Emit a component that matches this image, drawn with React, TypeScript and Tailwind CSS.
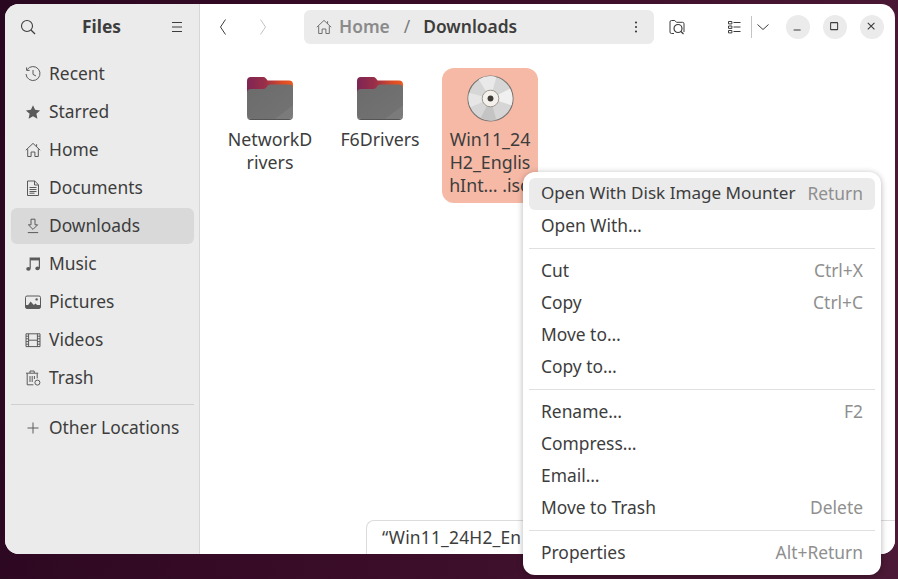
import React from "react";

const S = ({ children, size = 16, className = "" }: { children: React.ReactNode; size?: number; className?: string }) => (
  <svg width={size} height={size} viewBox="0 0 16 16" fill="none" stroke="currentColor" strokeWidth={1} className={"shrink-0 " + className}>
    {children}
  </svg>
);

const HomeIcon = ({ className = "" }: { className?: string }) => (
  <S className={className}>
    <path d="M0.8 8.2 8 1.4l7.2 6.8M2.7 7.2v7.3h3.4V10h3.8v4.5h3.4V7.2M11.6 2.2v2.6" />
  </S>
);

const icons: Record<string, React.ReactNode> = {
  Recent: (
    <S>
      <path d="M2.2 3.6A7 7 0 1 1 1 8" />
      <path d="M1.6 1.4v3h3M8 4v4.4l3 1.6" />
    </S>
  ),
  Starred: (
    <S>
      <path d="M8 1.2l2.1 4.6 5 .6-3.7 3.4 1 4.9L8 12.3l-4.4 2.4 1-4.9L.9 6.4l5-.6z" fill="currentColor" stroke="none" />
    </S>
  ),
  Home: <HomeIcon />,
  Documents: (
    <S>
      <path d="M2.5 1h7.2l3.8 3.8v10.7h-11zM9.5 1v4h4" />
      <path d="M4.5 7.5h7M4.5 9.5h7M4.5 11.5h7M4.5 13.2h5" />
    </S>
  ),
  Downloads: (
    <S>
      <path d="M6 1.2h4v5.6h2.6L8 11.4 3.4 6.8H6zM2.8 14.6h10.4" />
    </S>
  ),
  Music: (
    <S>
      <path d="M5.2 12.5V2.2h9.2v10" strokeWidth={1.2} />
      <path d="M5.2 2h9.2v2.4H5.2z" fill="currentColor" stroke="none" />
      <ellipse cx="3.4" cy="12.9" rx="2.2" ry="1.8" fill="currentColor" stroke="none" />
      <ellipse cx="12.5" cy="12.4" rx="2.2" ry="1.8" fill="currentColor" stroke="none" />
    </S>
  ),
  Pictures: (
    <S>
      <rect x="0.5" y="2" width="15" height="12.5" rx="1.5" />
      <path d="M1 14l4.6-6.4 3.2 3.5 1.8-1.7 4.4 4.6z" fill="currentColor" stroke="none" />
      <rect x="1" y="11" width="14" height="3" fill="currentColor" stroke="none" />
      <circle cx="11.6" cy="5.4" r="1.2" fill="currentColor" stroke="none" />
    </S>
  ),
  Videos: (
    <S>
      <path d="M1 1.8h14v12.8H1zM3.6 1.8v12.8M12.4 1.8v12.8M3.6 8.2h8.8" />
      <path d="M1 4.2h2.6M1 6.8h2.6M1 9.6h2.6M1 12.2h2.6M12.4 4.2H15M12.4 6.8H15M12.4 9.6H15M12.4 12.2H15" />
    </S>
  ),
  Trash: (
    <S>
      <path d="M1 3.2h12.2M5 3V1h4.2v2M2.2 3.4v11.4h6.2M12.2 3.4v5" />
      <path d="M5 6v6M7.2 6v6M9.4 6v3" />
      <circle cx="12.4" cy="12.6" r="2.5" />
    </S>
  ),
  "Other Locations": (
    <S>
      <path d="M8 2.5v11M2.5 8h11" />
    </S>
  ),
};

const places = ["Recent", "Starred", "Home", "Documents", "Downloads", "Music", "Pictures", "Videos", "Trash"];

const SidebarRow = ({ name }: { name: string }) => (
  <div className={"flex h-[36px] items-center gap-[8px] rounded-[6px] pl-[14px] " + (name === "Downloads" ? "bg-[#d9d9d9]" : "")}>
    <span className="flex w-[16px] text-[#5a5a5a]">{icons[name]}</span>
    <span className="mb-[2px] text-[#3d3d3d]">{name}</span>
  </div>
);

const Folder = () => (
  <svg width="46" height="43" viewBox="0 0 46 43" className="shrink-0">
    <defs>
      <linearGradient id="fb" x1="0" x2="1" y1="0" y2="0">
        <stop offset="0" stopColor="#7e2553" />
        <stop offset="0.4" stopColor="#9a2f48" />
        <stop offset="0.75" stopColor="#d84a28" />
        <stop offset="1" stopColor="#ee5a1f" />
      </linearGradient>
      <linearGradient id="ff" x1="0" x2="1" y1="0" y2="1">
        <stop offset="0" stopColor="#6b6b6b" />
        <stop offset="0.8" stopColor="#727272" />
        <stop offset="0.81" stopColor="#7b7b7b" />
        <stop offset="1" stopColor="#7b7b7b" />
      </linearGradient>
    </defs>
    <path d="M0 4a4 4 0 0 1 4-4h12a4 4 0 0 1 3 1.4l1.6 2.1H42a4 4 0 0 1 4 4V20H0z" fill="url(#fb)" />
    <path d="M0 16a4 4 0 0 1 4-4h12c2 0 2.8-.8 3.8-2.2C20.8 8.4 21.8 7.5 24 7.5h18a4 4 0 0 1 4 4V38a4 4 0 0 1-4 4H4a4 4 0 0 1-4-4z" fill="url(#ff)" />
    <path d="M0 38a4 4 0 0 0 4 4h38a4 4 0 0 0 4-4v1a4 4 0 0 1-4 4H4a4 4 0 0 1-4-4z" fill="#555" />
  </svg>
);

const Disc = () => (
  <svg width="47" height="47" viewBox="0 0 48 48" className="shrink-0">
    <circle cx="24" cy="24" r="23" fill="#d6d6d6" stroke="#77736f" strokeWidth="1.2" />
    <path d="M24 24 12 4.5A23 23 0 0 1 30 2z" fill="#e9e9e9" />
    <path d="M24 24 44 14A23 23 0 0 1 45.5 31z" fill="#f0f0f0" />
    <path d="M24 24 14 44A23 23 0 0 0 30 46z" fill="#c4c4c4" />
    <path d="M24 24 2 18A23 23 0 0 0 3.5 33z" fill="#e6e6e6" />
    <circle cx="24" cy="24" r="8.5" fill="#f4f1ec" stroke="#9a948c" strokeWidth="1" />
    <circle cx="24" cy="24" r="3" fill="#3f3b37" />
  </svg>
);

const FileItem = ({ label, selected, children }: { label: string[]; selected?: boolean; children: React.ReactNode }) => (
  <div className={"flex h-[135px] w-[96px] flex-col items-center rounded-[12px] pt-[6px] " + (selected ? "bg-[#f6b9a6]" : "")}>
    <div className="flex h-[48px] items-center">{children}</div>
    <div className="mt-[6px] flex w-full flex-col items-center text-center text-[17.8px] leading-[23px] text-[#3d3d3d]">
      {label.map((l) => (
        <span key={l} className="whitespace-nowrap">{l}</span>
      ))}
    </div>
  </div>
);

const MenuRow = ({ label, hint, active }: { label: string; hint?: string; active?: boolean }) => (
  <div className={"flex h-[32px] items-center justify-between rounded-[6px] px-[12px] " + (active ? "bg-[#ebebeb]" : "")}>
    <span className={"mb-[2px] whitespace-nowrap text-[#3d3d3d] " + (active ? "text-[17.1px]" : "")}>{label}</span>
    {hint && <span className="mb-[2px] whitespace-nowrap text-[#8f8f8f]">{hint}</span>}
  </div>
);

const Sep = () => <div className="my-[6px] h-px bg-[#e0e0e0]" />;

const CircleBtn = ({ children }: { children: React.ReactNode }) => (
  <div className="flex h-[24px] w-[24px] items-center justify-center rounded-full bg-[#ebebeb] text-[#3d3d3d]">{children}</div>
);

export default function App() {
  return (
    <div
      className="relative h-[579px] w-[898px] overflow-hidden bg-[linear-gradient(100deg,#2a0720_0%,#3a0c28_45%,#4c1a36_100%)] pl-[5px] pr-[3px] pt-[4px] text-[17.4px]"
      style={{ fontFamily: '"Noto Sans", sans-serif' }}
    >
      <div className="flex h-[550px] overflow-hidden rounded-[14px] bg-white">
        {/* Sidebar */}
        <aside className="flex w-[195px] shrink-0 flex-col border-r border-[#d6d6d6] bg-[#ebebeb]">
          <div className="flex h-[46px] shrink-0 items-center justify-between pl-[15px] pr-[14px] text-[#3d3d3d]">
            <S>
              <circle cx="7" cy="7" r="5.5" strokeWidth={1.1} />
              <path d="M11 11l4 4" strokeWidth={1.2} />
            </S>
            <span className="mb-[2px] -translate-x-[1px] font-bold">Files</span>
            <S>
              <path d="M3 3.5h10M3 8h10M3 12.5h10" />
            </S>
          </div>
          <nav className="flex flex-col gap-[2px] pl-[6px] pr-[5px] pt-[6px]">
            {places.map((p) => (
              <SidebarRow key={p} name={p} />
            ))}
            <div className="mb-[3px] mt-[6px] h-px bg-[#d0d0d0]" />
            <SidebarRow name="Other Locations" />
          </nav>
        </aside>

        {/* Main */}
        <main className="flex min-w-0 flex-1 flex-col">
          <header className="flex h-[46px] shrink-0 items-center pl-[15px] text-[#3d3d3d]">
            <div className="flex w-[89px] shrink-0 items-center gap-[24px]">
              <S><path d="M10.5 0.5 5.5 8l5 7.5" /></S>
              <S className="text-[#c4c4c4]"><path d="M5.5 0.5l5 7.5-5 7.5" /></S>
            </div>
            <div className="flex h-[34px] w-[350px] shrink-0 items-center rounded-[6px] bg-[#ebebeb] pl-[12px] pr-[10px] text-[#3d3d3d]">
              <HomeIcon className="text-[#6f6f6f]" />
              <span className="mb-[2px] ml-[7px] font-semibold text-[#8a8a8a]">Home</span>
              <span className="mb-[2px] ml-[14px] text-[#7a7a7a]">/</span>
              <span className="mb-[2px] ml-[13px] font-semibold">Downloads</span>
              <span className="ml-auto">
                <S>
                  <circle cx="8" cy="3.5" r="1.1" fill="currentColor" stroke="none" />
                  <circle cx="8" cy="8" r="1.1" fill="currentColor" stroke="none" />
                  <circle cx="8" cy="12.5" r="1.1" fill="currentColor" stroke="none" />
                </S>
              </span>
            </div>
            <span className="ml-[15px]">
              <S>
                <path d="M5 14.5H2.5a1.5 1.5 0 0 1-1.5-1.5V3a1.5 1.5 0 0 1 1.5-1.5h3.3l1.7 1.8h6A1.5 1.5 0 0 1 15 4.8V13" />
                <circle cx="9" cy="9.5" r="4" strokeWidth={1.2} />
                <path d="M12 12.5l2.5 2.5" strokeWidth={1.2} />
              </S>
            </span>
            <span className="ml-[42px]">
              <S>
                <path d="M1.5 2.5h3.4v2.4H1.5zM1.5 7h3.4v2.4H1.5zM1.5 11.5h3.4v2.4H1.5z" />
                <path d="M6.5 3.5h7M6.5 8h7M6.5 12.5h7" />
              </S>
            </span>
            <div className="ml-[8px] h-[22px] w-px bg-[#c4c4c4]" />
            <span className="ml-[3px]">
              <S><path d="M2.5 5.5 8 10.5l5.5-5" /></S>
            </span>
            <div className="ml-[15px] flex gap-[13px]">
              <CircleBtn>
                <S size={14}><path d="M3 11.5h8" strokeWidth={1.2} /></S>
              </CircleBtn>
              <CircleBtn>
                <S size={14}><rect x="3" y="3" width="8" height="8" rx="0.5" strokeWidth={1.2} /></S>
              </CircleBtn>
              <CircleBtn>
                <S size={14}><path d="M3.2 3.2l7.6 7.6M10.8 3.2l-7.6 7.6" strokeWidth={1.3} /></S>
              </CircleBtn>
            </div>
          </header>

          <div className="relative flex-1">
            <div className="flex gap-[14px] pl-[22px] pt-[18px]">
              <FileItem label={["NetworkD", "rivers"]}><Folder /></FileItem>
              <FileItem label={["F6Drivers"]}><Folder /></FileItem>
              <FileItem label={["Win11_24", "H2_Englis", "hInt… .iso"]} selected><Disc /></FileItem>
            </div>
            <div className="absolute bottom-0 left-[166px] right-0 flex h-[34px] items-center rounded-tl-[8px] border-l border-t border-[#dcdcdc] bg-white pl-[15px] tracking-[0.2px] text-[#3d3d3d]">
              “Win11_24H2_En
            </div>
          </div>
        </main>
      </div>

      {/* Context menu */}
      <div className="absolute left-[523px] top-[172px] w-[358px] rounded-[12px] bg-white p-[6px] shadow-[0_1px_6px_rgba(0,0,0,0.3)]">
        <MenuRow label="Open With Disk Image Mounter" hint="Return" active />
        <MenuRow label="Open With…" />
        <Sep />
        <MenuRow label="Cut" hint="Ctrl+X" />
        <MenuRow label="Copy" hint="Ctrl+C" />
        <MenuRow label="Move to…" />
        <MenuRow label="Copy to…" />
        <Sep />
        <MenuRow label="Rename…" hint="F2" />
        <MenuRow label="Compress…" />
        <MenuRow label="Email…" />
        <MenuRow label="Move to Trash" hint="Delete" />
        <Sep />
        <MenuRow label="Properties" hint="Alt+Return" />
      </div>
    </div>
  );
}
